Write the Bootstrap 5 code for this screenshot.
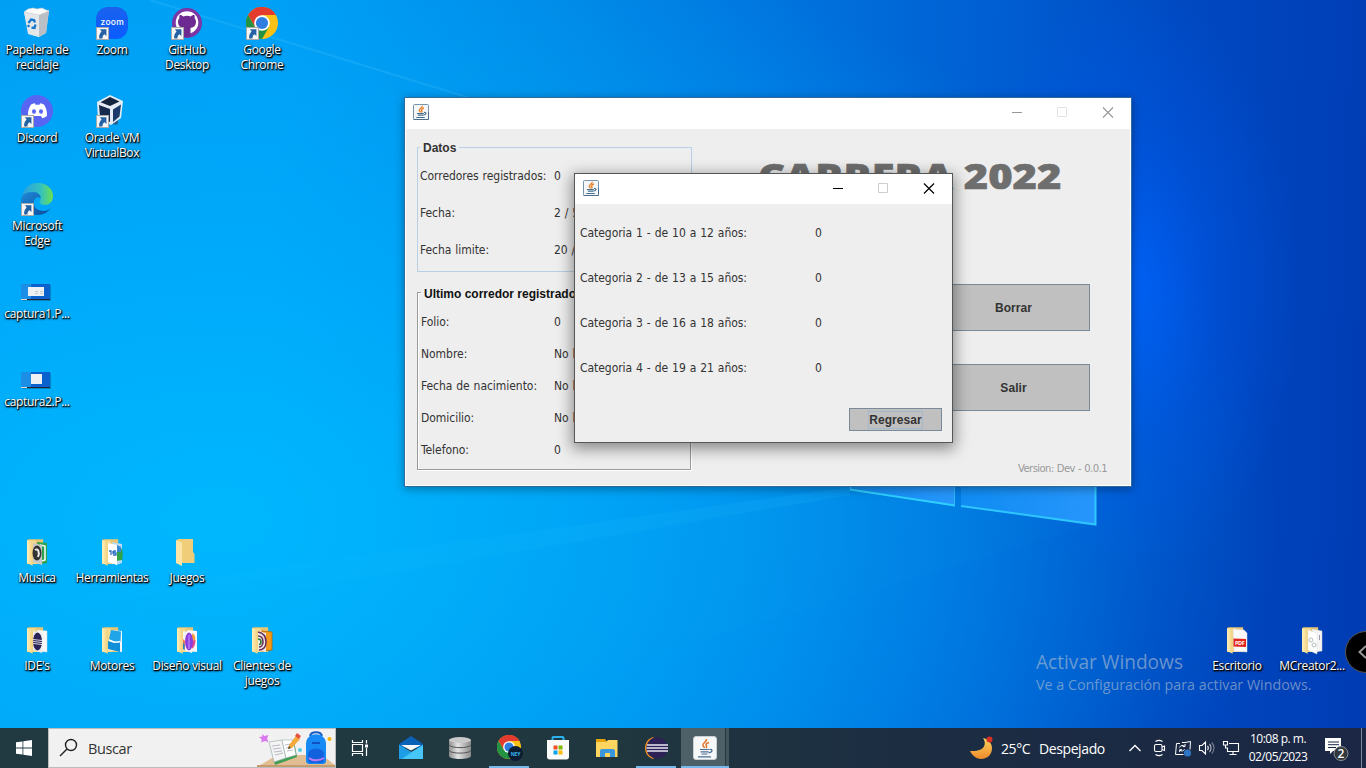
<!DOCTYPE html>
<html lang="es">
<head>
<meta charset="utf-8">
<meta name="viewport" content="width=device-width, initial-scale=1">
<title>Escritorio</title>
<link href="https://cdn.jsdelivr.net/npm/bootstrap@5.3.0/dist/css/bootstrap.min.css" rel="stylesheet">
<style>
  body { width:1366px; height:768px; overflow:hidden; font-family:"Open Sans","Noto Sans",sans-serif; font-size:12px; }
  svg { display:block; flex:none; }
  .desktop { height:728px; overflow:hidden;
    background:
      radial-gradient(ellipse 170px 300px at 1130px 285px, rgba(0,100,255,.8), rgba(0,92,245,.35) 50%, rgba(0,80,230,0) 100%),
      radial-gradient(ellipse 1060px 620px at 220px 520px, rgba(0,188,255,.85), rgba(0,178,255,.65) 40%, rgba(0,150,255,0) 100%),
      linear-gradient(92deg, #009cf2 0%, #009cf4 20%, #0088e6 40%, #0074de 56%, #005ed2 72%, #0049c1 85%, #003cb4 100%); }
  .wall { left:0; top:0; }
  .icon-grid { display:grid; grid-template-columns:repeat(18,75px); grid-template-rows:repeat(8,88px); position:relative; }
  .shortcut { display:flex; flex-direction:column; align-items:center; padding:7px 1px 0 0; color:#fff; text-align:center;
    line-height:15px; letter-spacing:-.33px; text-shadow:1px 1px 1px #000, 0 1px 2px #000, 1px 1px 2px rgba(0,0,0,.8); white-space:nowrap; }
  .shortcut svg { width:33px; height:33px; margin:0 0 2px 1px; overflow:visible; }
  .win { border:1px solid #3a6ea0; background:#eee; color:#333; font-family:"DejaVu Sans Condensed","DejaVu Sans",sans-serif; font-stretch:condensed; letter-spacing:-.04px; word-spacing:.5px; }
  .win-main { left:404px; top:97px; width:728px; height:390px; border-color:#2c6aa0; box-shadow:0 2px 9px rgba(0,0,0,.35); }
  .win-dialog { left:574px; top:173px; width:379px; height:270px; border-color:#565656; box-shadow:0 4px 14px 2px rgba(0,0,0,.42); }
  .titlebar { height:31px; background:#fff; padding:0 0 2px 8px; }
  .win-dialog .titlebar { height:30px; }
  .win-main .client { height:357px; border:solid #fff; border-width:0 1px 1px; }
  .group-a { border:1px solid #b8cfe5; width:275px; height:125px; margin:18px 0 0 11px; padding:10px 0 0 2px; }
  .group-b { border:1px solid #9a9a9a; box-shadow:1px 1px 0 #fff, inset 1px 1px 0 #fff; width:274px; height:178px; margin:20px 0 0 11px; padding:13px 0 0 3px; }
  .legend-txt { font:bold 12px/14px "Liberation Sans",Arial,sans-serif; letter-spacing:0; word-spacing:0; background:#eee; width:max-content; padding:0 3px; }
  .group-a .legend-txt { margin-top:-17px; }
  .group-b .legend-txt { margin-top:-19px; color:#111; }
  .rowline { display:grid; grid-template-columns:134px 1fr; align-items:center; white-space:nowrap; }
  .group-a .rowline { height:37px; }
  .group-b .rowline { height:32px; grid-template-columns:133px 1fr; }
  .rows-a { margin-top:2px; } .rows-b { margin-top:5px; }
  .hero { font-family:"Open Sans",sans-serif; font-stretch:normal; font-weight:800; font-size:35px; line-height:38px; height:36px; color:#6e6e6e; letter-spacing:0; word-spacing:0; white-space:nowrap;
    transform:scaleX(1.19); transform-origin:0 0; -webkit-text-stroke:.6px #6e6e6e; width:max-content; }
  .side { width:372px; }
  .sw-btn { --bs-btn-bg:#c0c0c0; --bs-btn-hover-bg:#b8b8b8; --bs-btn-color:#333; --bs-btn-border-color:#7a8a99; --bs-btn-border-radius:0;
    --bs-btn-padding-x:0; --bs-btn-padding-y:0; font:bold 12px/1 "Liberation Sans",Arial,sans-serif; letter-spacing:.05px; }
  .big-btn { width:153px; height:47px; }
  .cat { display:grid; grid-template-columns:235px 1fr; height:45px; align-items:center; letter-spacing:-.05px; word-spacing:.6px; }
  .ver { font-size:10px; color:#999; font-family:"DejaVu Sans",sans-serif; font-stretch:normal; letter-spacing:-.55px; word-spacing:.5px; }
  .mark-txt { left:1036px; top:650px; color:rgba(180,192,208,.6); white-space:nowrap; }
  .mark-txt .t1 { font-size:19.1px; line-height:24px; } .mark-txt .t2 { font-size:14.3px; line-height:22px; }
  .edge-knob { left:1345px; top:631px; width:42px; height:42px; border-radius:50%; background:#000; border:1px solid #555; }
  .taskbar { height:40px; background:linear-gradient(90deg,#213a42 0%,#20373f 45%,#1c2d42 66%,#1b2745 100%); color:#fff; }
  .searchbox { width:288px; height:40px; background:#f1f1f1; border:1px solid #b9bdbf; color:#333; font-size:14.5px; }
  .task { width:48px; height:40px; position:relative; display:flex; align-items:center; justify-content:center; }
  .running::after { content:""; position:absolute; left:4px; right:4px; bottom:0; height:2px; background:#76b9ed; }
  .current { background:linear-gradient(90deg,#4d6067 44px,#26383f 44px,#26383f 45px,#425359 45px); }
  .current::after { left:0; right:0; }
  .tray-txt { font-size:14px; letter-spacing:-.4px; white-space:nowrap; }
  .clock { font-size:12px; line-height:18px; width:72px; text-align:center; letter-spacing:-.5px; white-space:nowrap; }
</style>
</head>
<body class="m-0">
<svg width="0" height="0" class="position-absolute">
  <defs>
    <linearGradient id="fold" x1="0" x2="1"><stop offset="0" stop-color="#fff0bd"/><stop offset="1" stop-color="#f3d07c"/></linearGradient>
    <linearGradient id="edgeA" x1="0" x2="1"><stop offset="0" stop-color="#2a9fe0"/><stop offset=".6" stop-color="#35c1c0"/><stop offset="1" stop-color="#6be04e"/></linearGradient>
    <linearGradient id="edgeB" x1="0" y1="0" x2="1" y2="1"><stop offset="0" stop-color="#1f8ad8"/><stop offset="1" stop-color="#0c4a9a"/></linearGradient>
    <linearGradient id="pane" x1="0" x2="1"><stop offset="0" stop-color="#0f8cf2"/><stop offset="1" stop-color="#2796fc"/></linearGradient>
    <linearGradient id="silver" x1="0" x2="1"><stop offset="0" stop-color="#8e8e8e"/><stop offset=".4" stop-color="#e4e4e4"/><stop offset="1" stop-color="#8a8a8a"/></linearGradient>
    <linearGradient id="zm" x1="0" y1="0" x2="0" y2="1"><stop offset="0" stop-color="#1a62ee"/><stop offset="1" stop-color="#0b5cff"/></linearGradient>
    <linearGradient id="moon" x1="0" y1="0" x2="0" y2="1"><stop offset="0" stop-color="#ffd25e"/><stop offset="1" stop-color="#ee8a2a"/></linearGradient>
    <linearGradient id="ray" x1="0" x2="1"><stop offset="0" stop-color="#3cf" stop-opacity="0"/><stop offset="1" stop-color="#3cf" stop-opacity=".3"/></linearGradient>
    <symbol id="lnk" viewBox="0 0 13 13"><rect x=".5" y=".5" width="12" height="12" fill="#f6f6f6" stroke="#a9a9a9"/><path d="M3.800 2.200h6.600V9L8.600 7.200C7 8 6.600 9.200 6.400 11.400H3.200C2.800 8.400 3.800 6.400 5.600 4.200z" fill="#2461a5"/></symbol>
    <symbol id="folder" viewBox="0 0 20 28"><path d="M0 1l1.500-1H17v26H0z" fill="#e8c473"/><path d="M1 1h8l2 25H1z" fill="#f5d98c"/><path d="M0 1l6 2.500V28L0 25z" fill="url(#fold)"/></symbol>
    <symbol id="java" viewBox="0 0 16 16"><rect x=".5" y=".5" width="15" height="15" rx="1" fill="#f4f6f8" stroke="#7593ad"/><path d="M.5 15.500h15V8" fill="none" stroke="#4c6f8e"/><path d="M9.300 1.800C9.600 4 5.500 4.600 6.300 6.600c.2.600 1 1 1.200 1.800M11 4C8.600 4.600 8.200 5.800 8.900 6.800c.3.600.1 1.100-.4 1.600" fill="none" stroke="#e8802a" stroke-width="1.400"/><path d="M4 9.500h6.800M4.900 11.200h5.400M3.300 13.500h8.400M11 8.500c2.800-.3 2.400 2.200-.6 2.500" fill="none" stroke="#47708f" stroke-width="1.200"/></symbol>
    <symbol id="chrome" viewBox="0 0 32 32"><circle cx="16" cy="16" r="16" fill="#fbc116"/><path d="M2.100 8A16 16 0 0 1 29.900 8H16l-7 12z" fill="#e33b2e"/><path d="M2.100 8A16 16 0 0 0 16 32l7-12-14 0z" fill="#229342"/><circle cx="16" cy="16" r="7.800" fill="#fff"/><circle cx="16" cy="16" r="6.100" fill="#2f7de1"/></symbol>
  </defs>
</svg>

<main class="desktop position-relative">
  <svg class="wall position-absolute" width="1366" height="728" viewBox="0 0 1366 728">
    <path d="M0 606L850 487V495L0 640z" fill="url(#ray)" opacity=".4"/>
    <path d="M400 728L1096 525L850 492 0 618V728z" fill="#2bd" opacity=".04"/>
    <path d="M150 0L640 150" stroke="#5cf" stroke-width="2" opacity=".2"/>
    <path d="M850 440H955V506L850 490z" fill="url(#pane)"/><path d="M850 489.500L955 505.500" stroke="#2ecfff" stroke-width="2"/><path d="M850.500 440V490" stroke="#2ecfff"/>
    <path d="M954.500 440V505" stroke="#2fb8ff" stroke-width="1"/>
    <path d="M961 440H1096V525L961 506.500z" fill="url(#pane)"/><path d="M961 506L1095.500 524.500V440" fill="none" stroke="#2fc6ff" stroke-width="2"/>
  </svg>

  <div class="icon-grid">
    <div class="shortcut" style="grid-area:1/1"><svg viewBox="0 0 33 33"><path d="M3 5l25-2-3 23-7 4-10-3z" fill="#d9dde0"/><path d="M18 7l10-3-3 22-7 4z" fill="#b9bfc5"/><path d="M3 5l15 3v22L7 27z" fill="#e4e7e9"/><path d="M3 5l4-3 5-1 4 1 5-1 4 2 3 1-10 4z" fill="#fafafa" stroke="#c7cdd2" stroke-width=".6"/><path d="M7.500 16l2.500-3.500 3 .6 1 2.400M14.500 17.500l-1 3.500-3-.3M8 20l-1-2" fill="none" stroke="#1678d0" stroke-width="2.300"/></svg>Papelera de<br>reciclaje</div>
    <div class="shortcut" style="grid-area:1/2"><svg viewBox="0 0 33 33"><rect x="0" width="32" height="32" rx="12" fill="url(#zm)"/><text x="16" y="18" font-family="Inter,sans-serif" font-size="8.500" font-weight="500" fill="#fff" text-anchor="middle" textLength="23" style="text-shadow:none">zoom</text><use href="#lnk" x="0" y="20" width="13" height="13"/></svg>Zoom</div>
    <div class="shortcut" style="grid-area:1/3"><svg viewBox="0 0 33 33"><circle cx="16" cy="16" r="15" fill="#7c35a5"/><circle cx="16" cy="15.500" r="11.300" fill="#fff"/><path d="M12.500 30v-7c-2 .5-3.500-.2-4.500-2.500M19.500 30v-9c3.500-.5 5.500-2.500 5.500-6 0-1.700-.6-2.800-1.400-3.700.3-1 .2-2-.3-3.200-1.400 0-2.300.5-3.500 1.300a14 14 0 0 0-7.600 0C11 8.600 10 8.100 8.700 8.100 8.200 9.300 8.100 10.300 8.400 11.300 7.600 12.200 7 13.300 7 15c0 3.500 2 5.500 5.500 6v9z" fill="#6d2a91"/><use href="#lnk" x="0" y="20" width="13" height="13"/></svg>GitHub<br>Desktop</div>
    <div class="shortcut" style="grid-area:1/4"><svg viewBox="0 0 33 33"><use href="#chrome" width="32" height="32"/><use href="#lnk" x="0" y="20" width="13" height="13"/></svg>Google<br>Chrome</div>
    <div class="shortcut" style="grid-area:2/1"><svg viewBox="0 0 33 33"><circle cx="16" cy="16" r="16" fill="#5865f2"/><path d="M10 9.500c2-.9 3.200-1.100 3.800-1.200l.8 1.400h3.800l.8-1.400c1.200.2 2.500.6 3.800 1.200 2.300 3.500 3.200 7.200 2.900 11.500-1.500 1.200-3 1.800-4.600 2.200l-1.300-2.200h-7l-1.300 2.200C10 22.800 8.600 22.200 7 21c-.3-4.300.6-8 3-11.500z" fill="#fff"/><ellipse cx="13" cy="16.500" rx="2" ry="2.200" fill="#5865f2"/><ellipse cx="20" cy="16.500" rx="2" ry="2.200" fill="#5865f2"/><use href="#lnk" x="0" y="20" width="13" height="13"/></svg>Discord</div>
    <div class="shortcut" style="grid-area:2/2"><svg viewBox="0 0 33 33"><path d="M15 28c4 3 8 2 7-3z" fill="#28598c"/><path d="M1 7L14 0l13 6-2 17-10 7-13-6z" fill="#e6ecf5"/><path d="M4.500 7.200L14 2l9.500 4.500-9.500 4.500z" fill="#14243d"/><path d="M3 10l11 4v13L4 22z" fill="#162b4d"/><path d="M17 14.500l8-5-1.500 12L17 27z" fill="#1b3a6b"/><use href="#lnk" x="0" y="20" width="13" height="13"/></svg>Oracle VM<br>VirtualBox</div>
    <div class="shortcut" style="grid-area:3/1"><svg viewBox="0 0 33 33"><path d="M1 16C1 6 8 0 17 0c9 0 15 6 15 13 0 6-4 9-8.500 9-3.500 0-5-1.700-5-3 0-1 1.200-1.400 1.200-4 0-3-3-6-7.700-6C7 9 2.500 11 1 16z" fill="url(#edgeA)"/><path d="M12 9c4.700 0 7.700 3 7.700 6-4-2-7 1-7 5 0 5 5 8 10 8 3 0 5-1 7-3-2.500 4-7 7-13 7C7 32 0 25 0 17 0 12 5 9 12 9z" fill="url(#edgeB)"/><use href="#lnk" x="0" y="20" width="13" height="13"/></svg>Microsoft<br>Edge</div>
    <div class="shortcut" style="grid-area:4/1"><svg viewBox="0 0 33 33"><rect x="1" y="14" width="29" height="16" fill="#045" opacity=".35"/><rect x="0" y="13" width="29" height="16" fill="#0b62cf"/><path d="M0 13h10v15H0z" fill="#1c8ee6"/><path d="M0 28.500h29" stroke="#223"/><path d="M0 28.500h6" stroke="#ddd"/><rect x="7" y="16" width="16" height="9" fill="#eef1f4"/><path d="M14 20.500h3m2 0h3m-8 2h3m2 0h3" stroke="#c9c9c9"/></svg>captura1.P...</div>
    <div class="shortcut" style="grid-area:5/1"><svg viewBox="0 0 33 33"><rect x="1" y="14" width="29" height="16" fill="#045" opacity=".35"/><rect x="0" y="13" width="29" height="16" fill="#0b62cf"/><path d="M0 13h10v15H0z" fill="#1c8ee6"/><path d="M0 28.500h29" stroke="#223"/><path d="M0 28.500h6" stroke="#ddd"/><rect x="10" y="15" width="11" height="10" fill="#eef1f4"/></svg>captura2.P...</div>

    <div class="shortcut" style="grid-area:7/1"><svg viewBox="-1 0 33 33"><use href="#folder" x="5" y="4" width="19" height="27"/><path d="M15 7l10 1v20l-6 1z" fill="#2ba24c"/><path d="M18 10l5 1v14l-3 1" fill="none" stroke="#fff" stroke-width="1.500"/><path d="M11 8l9 2v20L11 27z" fill="#c9c9c9"/><ellipse cx="15" cy="18" rx="4.500" ry="7.500" fill="#333"/><path d="M13 15c3-2 5 2 3 7" fill="none" stroke="#eee" stroke-width="2"/></svg>Musica</div>
    <div class="shortcut" style="grid-area:7/2"><svg viewBox="-1 0 33 33"><use href="#folder" x="5" y="4" width="19" height="27"/><path d="M15 7l10 2v19l-6 2z" fill="#b9dcf4"/><path d="M19 11c6 0 8 5 6 14l-6 1z" fill="#2fa24a"/><path d="M20 10l4 2v5h-4z" fill="#358bd6"/><path d="M11 8l9 2v20L11 27z" fill="#fff"/><path d="M12 16h2v4m2-4v3m3-3h-2v2h2v2h-3" fill="none" stroke="#2d6ec2" stroke-width="1.300"/></svg>Herramientas</div>
    <div class="shortcut" style="grid-area:7/3"><svg viewBox="0 0 33 33"><path d="M6 4.500L8 4h14v13l1.500 2v9H8z" fill="#f0cd78"/><path d="M5 5l6 2.500V31l-6-3z" fill="#fbe5a6"/></svg>Juegos</div>
    <div class="shortcut" style="grid-area:8/1"><svg viewBox="-1 0 33 33"><use href="#folder" x="5" y="4" width="19" height="27"/><path d="M15 7l10 1v21l-10-1z" fill="#f6f6f6" stroke="#ddd" stroke-width=".5"/><path d="M11 8l9 2v20L11 27z" fill="#e9e9ef"/><ellipse cx="15.500" cy="18.500" rx="4.500" ry="9" fill="#2a2257"/><path d="M11 16.500l9 1M11 18.500l9 1M11 20.500l9 1" stroke="#fff" stroke-width=".8"/></svg>IDE's</div>
    <div class="shortcut" style="grid-area:8/2"><svg viewBox="-1 0 33 33"><use href="#folder" x="5" y="4" width="19" height="27"/><path d="M14 7l11 1v21l-14-2z" fill="#f6f6f6"/><path d="M14 7l10 1.500-.5 10L18 19l-6-3z" fill="#1fa5e8"/><path d="M11 18l6 2 6-.5V29l-12-3z" fill="#118fd8"/><path d="M12 17l6 2 5-.5" stroke="#fff" fill="none"/></svg>Motores</div>
    <div class="shortcut" style="grid-area:8/3"><svg viewBox="-1 0 33 33"><use href="#folder" x="5" y="4" width="19" height="27"/><path d="M15 7l10 1v21l-10-1z" fill="#f6f6f6"/><path d="M19 10c4 1 5 4 4 8l-4 2z" fill="#f2a13a"/><path d="M19 18l4.500-1c0 5-1.500 8-4.500 9z" fill="#e04a8e"/><path d="M11 8l9 2v20L11 27z" fill="#f4f4f4"/><ellipse cx="17" cy="18.500" rx="4" ry="9" fill="#8e3ee0"/><path d="M11 16l2 2v9l-2-1z" fill="#e75"/><path d="M11 20l1.500 1v6l-1.500-1z" fill="#28c"/><path d="M17 12v14" stroke="#b07af0" stroke-width="1.500"/></svg>Diseño visual</div>
    <div class="shortcut" style="grid-area:8/4"><svg viewBox="-1 0 33 33"><use href="#folder" x="5" y="4" width="19" height="27"/><path d="M15 8l10 1v18l-10 1z" fill="#f39a1d" stroke="#b36800" stroke-width=".8"/><path d="M11 8l8 2v19L11 27z" fill="#f1ede4"/><path d="M11 9c6 1 8 5 8 10s-3 8-7 8M11 13c4 0 5 3 5 6s-2 5-4 5" fill="none" stroke="#6b2d5e" stroke-width="1.600"/><path d="M11 16c2 0 3 1.500 3 3s-1 2.500-2 2.500" fill="none" stroke="#2f7a38" stroke-width="1.600"/></svg>Clientes de<br>juegos</div>
    <div class="shortcut" style="grid-area:8/17"><svg viewBox="-1 0 33 33"><use href="#folder" x="5" y="4" width="19" height="27"/><path d="M11 6l11 1 3 3v19l-13-1z" fill="#fafafa" stroke="#ddd" stroke-width=".5"/><path d="M11.500 15.500l12.500.5v8l-12.500-.5z" fill="#e1251b"/><text x="13" y="22" font-size="5.500" font-weight="700" fill="#fff" textLength="9.500" style="text-shadow:none">PDF</text></svg>Escritorio</div>
    <div class="shortcut" style="grid-area:8/18"><svg viewBox="-1 0 33 33"><use href="#folder" x="5" y="4" width="19" height="27"/><path d="M15 6l10 2v20l-8 1z" fill="#f4f4f4" stroke="#ccc" stroke-width=".5"/><path d="M11 7l9 3v21L11 27z" fill="#fff" stroke="#ddd" stroke-width=".5"/><circle cx="14" cy="17" r="2" fill="none" stroke="#b4bcbc"/><circle cx="17" cy="22" r="2" fill="none" stroke="#b4bcbc"/><path d="M22.500 12v5" stroke="#99a"/></svg>MCreator2...</div>
  </div>

  <div class="mark-txt position-absolute"><div class="t1">Activar Windows</div><div class="t2">Ve a Configuración para activar Windows.</div></div>
  <div class="edge-knob position-absolute"><svg width="22" height="40" viewBox="0 0 22 40"><path d="M20 14l-6.500 6 6.500 6" fill="none" stroke="#999" stroke-width="2"/></svg></div>

  <section class="win win-main position-absolute">
    <header class="titlebar d-flex align-items-center">
      <svg width="16" height="16" style="margin-top:-1px"><use href="#java"/></svg>
      <svg class="ms-auto" width="120" height="29" viewBox="0 0 120 29" fill="none" stroke="#999"><path d="M1 14.500h10"/><path d="M46.500 9.500h9v9h-9z" stroke="#e3e3e3"/><path d="M92 9.500l10 10m0-10l-10 10" stroke-width="1.100"/></svg>
    </header>
    <div class="client d-flex justify-content-between">
      <div>
        <div class="group-a">
          <div class="legend-txt">Datos</div>
          <div class="rows-a">
            <div class="rowline"><span>Corredores registrados:</span><span>0</span></div>
            <div class="rowline"><span>Fecha:</span><span>2 / 5 / 2023</span></div>
            <div class="rowline"><span>Fecha limite:</span><span>20 / 5 / 2023</span></div>
          </div>
        </div>
        <div class="group-b">
          <div class="legend-txt">Ultimo corredor registrado</div>
          <div class="rows-b">
            <div class="rowline"><span>Folio:</span><span>0</span></div>
            <div class="rowline"><span>Nombre:</span><span>No hay</span></div>
            <div class="rowline"><span>Fecha de nacimiento:</span><span>No hay</span></div>
            <div class="rowline"><span>Domicilio:</span><span>No hay</span></div>
            <div class="rowline"><span>Telefono:</span><span>0</span></div>
          </div>
        </div>
      </div>
      <div class="side d-flex flex-column">
        <div class="hero mt-4 pt-1">CARRERA 2022</div>
        <div class="d-flex flex-column align-items-end" style="gap:33px;margin:95px 40px 0 0">
          <button class="btn sw-btn big-btn">Borrar</button>
          <button class="btn sw-btn big-btn">Salir</button>
        </div>
        <div class="ver text-end mt-auto" style="padding:0 23px 9px 0">Version: Dev - 0.0.1</div>
      </div>
    </div>
  </section>

  <section class="win win-dialog position-absolute">
    <header class="titlebar d-flex align-items-center">
      <svg width="16" height="16"><use href="#java"/></svg>
      <svg class="ms-auto" width="120" height="28" viewBox="0 0 120 28" fill="none" stroke="#000"><path d="M1 14.500h10"/><path d="M46.500 9.500h9v9h-9z" stroke="#ccc"/><path d="M92 9.500l10 10m0-10l-10 10" stroke-width="1.200"/></svg>
    </header>
    <div style="padding:6px 0 0 5px">
      <div class="cat"><span>Categoria 1 - de 10 a 12 años:</span><span>0</span></div>
      <div class="cat"><span>Categoria 2 - de 13 a 15 años:</span><span>0</span></div>
      <div class="cat"><span>Categoria 3 - de 16 a 18 años:</span><span>0</span></div>
      <div class="cat"><span>Categoria 4 - de 19 a 21 años:</span><span>0</span></div>
    </div>
    <div class="d-flex justify-content-end" style="padding:18px 10px 0 0">
      <button class="btn sw-btn" style="width:93px;height:23px"><span style="outline:1px solid #a3b8cc;padding:1px 0">Regresar</span></button>
    </div>
  </section>
</main>

<footer class="taskbar d-flex align-items-center">
  <div class="task"><svg width="16" height="16" viewBox="0 0 16 16" fill="#fff"><path d="M0 2.300l6.500-.9v6.200H0zM7.300 1.300L16 0v7.600H7.300zM0 8.400h6.500v6.200L0 13.700zM7.300 8.400H16V16l-8.700-1.300z"/></svg></div>
  <div class="searchbox d-flex align-items-center">
    <svg class="ms-2" width="24" height="20" viewBox="0 0 24 20"><circle cx="14" cy="7" r="5.500" fill="none" stroke="#222" stroke-width="1.400"/><path d="M10 11l-7 7" stroke="#222" stroke-width="1.400"/></svg>
    <span style="margin-left:7px;letter-spacing:-.4px;padding-top:2px">Buscar</span>
    <svg class="ms-auto" width="78" height="38" viewBox="0 0 78 38">
      <path d="M0 38l20-12h45l13 10v2z" fill="#e0bd92"/><path d="M0 36h79v2H0z" fill="#c69c6d"/>
      <path d="M13 16l24-4 3 16-22 8z" fill="#3f9e54"/><path d="M12 13l13-2 4 18-12 4z" fill="#f4f4f4" stroke="#9aa" stroke-width=".6"/><path d="M25 11l11 0 3 15-10 3z" fill="#fff" stroke="#9aa" stroke-width=".6"/><path d="M15 17l8-1M16 20l8-1M17 23l8-1M18 26l8-2M28 16l6-1M29 19l6-1M30 22l6-1" stroke="#aab" stroke-width=".8"/>
      <path d="M31 20l1-4 7-9 4 3-8 9z" fill="#f6a93a"/><path d="M38 7l2-3 4 3-2 3z" fill="#e8533f"/><path d="M31 20l1-3 2 2z" fill="#444"/>
      <path d="M53 7c1-5 11-5 12 0" fill="none" stroke="#1759c4" stroke-width="1.800"/><path d="M49 15c0-13 20-13 20 0v16c0 3-1 4-4 4H53c-3 0-4-1-4-4z" fill="#1689f5"/><path d="M51 25c0-7 16-7 16 0v5c0 3-1 4-4 4h-8c-3 0-4-1-4-4z" fill="#1262de"/><path d="M52 29c3 3 11 3 15 0" stroke="#b77bf2" fill="none" stroke-width="2"/><path d="M55 14h8" stroke="#0d52c0" stroke-width="2"/>
      <path d="M5 5l2.500 2 4-1-1.500 3.500 1.500 3.500-4-1-3 1.500 0-3.500-2.500-2 3.500-.5z" fill="#d977ee"/><circle cx="43" cy="21" r="2" fill="#54cfe0"/><circle cx="72.500" cy="10" r="2" fill="#ffb300"/>
    </svg>
  </div>
  <div class="task"><svg width="18" height="18" viewBox="0 0 18 18" fill="none" stroke="#fff"><path d="M1.500 1V3.500h10V1M1.500 17v-2.500h10V17M1.500 5.500h10v7h-10zM15.500 1v3.500M15.500 9v8" stroke-width="1.200"/><path d="M14 5.500h3v3h-3z" fill="#fff" stroke="none"/></svg></div>
  <nav class="d-flex" style="gap:1px;margin-left:3px">
    <div class="task"><svg width="24" height="24" viewBox="0 0 24 24"><path d="M0 8L12 0l12 8v4H0z" fill="#0a62b8"/><path d="M0 9v14h24V9l-12 7z" fill="#2bb0ee"/><path d="M24 9v14H3z" fill="#45c6f7"/><path d="M0 9l12 7-10 7H0z" fill="#1d9de6"/><path d="M2 9h20l-10 5.500z" fill="#f4f8fa"/></svg></div>
    <div class="task"><svg width="24" height="24" viewBox="0 0 24 24"><path d="M1 4v16c0 4 22 4 22 0V4z" fill="url(#silver)"/><path d="M1 9c2 3.500 20 3.500 22 0M1 14.500c2 3.500 20 3.500 22 0" fill="none" stroke="#555"/><ellipse cx="12" cy="4" rx="11" ry="3" fill="#c9c9c9"/></svg></div>
    <div class="task running"><svg width="26" height="26" viewBox="0 0 26 26" style="margin-left:2px"><use href="#chrome" width="24" height="24"/><circle cx="18.500" cy="18.500" r="7.500" fill="#0c1c33"/><text x="13.700" y="20.500" font-size="5" font-weight="700" fill="#35b8f0" textLength="9.600">NEY</text></svg></div>
    <div class="task"><svg width="24" height="24" viewBox="0 0 24 24"><path d="M6.500 5V2c0-.8.400-1 1-1h9c.6 0 1 .2 1 1v3" fill="none" stroke="#29b4f0" stroke-width="2"/><path d="M1 4h22v17c0 1.500-1 2.500-2.500 2.500h-17C2 23.500 1 22.500 1 21z" fill="#fafafa"/><path d="M7.500 9.500h4v4h-4z" fill="#f25022"/><path d="M12.500 9.500h4v4h-4z" fill="#7fba00"/><path d="M7.500 14.500h4v4h-4z" fill="#00a4ef"/><path d="M12.500 14.500h4v4h-4z" fill="#ffb900"/></svg></div>
    <div class="task"><svg width="24" height="24" viewBox="0 0 24 24"><path d="M1 3h9l2 3H1z" fill="#e5a50a"/><path d="M1 6h10l2-2h9.500v17H1z" fill="#ffd560"/><path d="M5 21v-6c0-1 .6-2 2-2h11c1.400 0 2 1 2 2v6h-5v-4h-5v4z" fill="#3a96dd"/></svg></div>
    <div class="task running"><svg width="24" height="24" viewBox="0 0 24 24"><path d="M10 1C-2 3-2 21 10 23 4 17 4 7 10 1z" fill="#f7941e"/><circle cx="13" cy="12" r="10.700" fill="#2c2255"/><path d="M3 9h21M2.500 12h21.500M3 15h21" stroke="#e9e7f4" stroke-width="1.600"/></svg></div>
    <div class="task running current"><svg width="24" height="24" viewBox="0 0 24 24"><rect x=".5" y=".5" width="23" height="23" rx="2.500" fill="#f6f7f8" stroke="#c8d0d6"/><path d="M13.500 3C14 6 9 7 10 9.500c.3.900 1.200 1.500 1.500 2.500M16 6.500c-3 .8-3.500 2-2.500 3.500.4.800.2 1.400-.5 2" fill="none" stroke="#e37222" stroke-width="1.500"/><path d="M7 13.500h9M7.600 15.800h8M8.500 18h6M5 20.800h13M16.500 13.500c3.500-.6 3.500 2.400-.8 3.300" fill="none" stroke="#4a6f91" stroke-width="1.200"/></svg></div>
  </nav>
  <div class="d-flex align-items-center ms-auto h-100" style="width:397px">
    <svg width="24" height="24" viewBox="0 0 24 24"><path d="M14 2c4 6 2 14-13 13 2 4 6 8 11 8 6 0 11-4 11-11 0-5-4-9-9-10z" fill="url(#moon)"/><circle cx="20.500" cy="3.500" r="3" fill="#d93025"/></svg>
    <span class="tray-txt" style="margin-left:8px;width:38px">25°C</span>
    <span class="tray-txt" style="width:86px">Despejado</span>
    <svg style="margin-left:3px" width="14" height="12" viewBox="0 0 14 12"><path d="M1.500 9L7 3.500 12.500 9" fill="none" stroke="#fff" stroke-width="1.300"/></svg>
    <svg style="margin-left:11px" width="14" height="18" viewBox="0 0 14 18" fill="none" stroke="#fff" stroke-width="1.100"><path d="M2.500 2.500c2-1.300 5-1.300 7 0M2.500 15.500c2 1.300 5 1.300 7 0"/><rect x="1.500" y="5.500" width="7.500" height="7" rx="1.500"/><path d="M9 8l2.500-1v4.500L9 10.500"/></svg>
    <svg style="margin-left:7px" width="18" height="18" viewBox="0 0 18 18" fill="none" stroke="#fff" stroke-width="1"><path d="M9.500 15.500h-8l1-11H6M8 3.500h3l5.500-1-.5 8"/><path d="M5.500 8.500C6.500 6.200 9 5.800 10.800 7.300M11 5v2.500H8.600M10.500 10.300C9.600 12 7.500 12.500 6 11.200M5.700 13v-2.300h2.300"/><circle cx="13.500" cy="14" r="3.600" fill="#2f75c4" stroke="none"/></svg>
    <svg style="margin-left:6px" width="18" height="18" viewBox="0 0 18 18" fill="none" stroke="#fff" stroke-width="1.100"><path d="M1.500 6.500H4L7.500 3v12L4 11.500H1.500zM9.500 7c1 1 1 3 0 4"/><path d="M11.500 5c2 2 2 6 0 8" opacity=".7"/><path d="M13.700 3.500c3 3 3 8 0 11" opacity=".4"/></svg>
    <svg style="margin-left:6px" width="18" height="18" viewBox="0 0 18 18" fill="none" stroke="#fff" stroke-width="1.100"><path d="M7 4.500h9.500v8h-11V8.500M7.500 15.500h7M11 12.500v3M1.500 2.500h4v3.500h-4zM3.500 6v3h2"/></svg>
    <div class="clock" style="margin-left:2px">10:08 p. m.<br>02/05/2023</div>
    <svg style="margin-left:11px" width="26" height="26" viewBox="0 0 26 26"><path d="M0 3h16v13H8l-3 3v-3H0z" fill="#fff"/><path d="M3 7h11M3 9.700h11M3 12.500h8" stroke="#1c2944" stroke-width="1"/><circle cx="16" cy="18.500" r="7" fill="#33383d" stroke="#8a8f94"/><text x="16" y="22.800" font-size="12" font-weight="600" fill="#fff" text-anchor="middle">2</text></svg>
    <div class="border-start h-100 ms-auto" style="width:5px;--bs-border-color:#7b8594"></div>
  </div>
</footer>
<script src="https://cdn.jsdelivr.net/npm/bootstrap@5.3.0/dist/js/bootstrap.bundle.min.js"></script>
</body>
</html>
